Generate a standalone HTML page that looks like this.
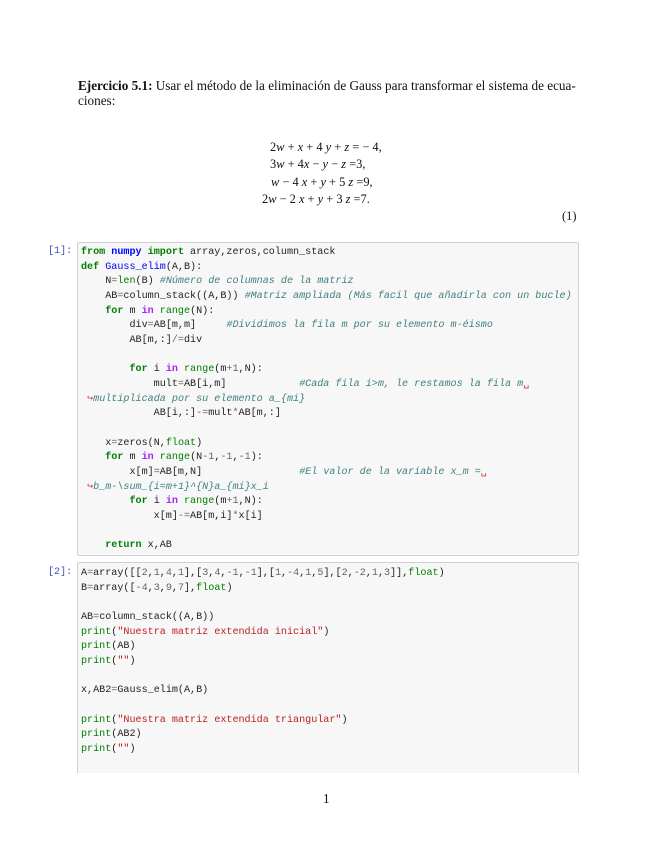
<!DOCTYPE html>
<html><head><meta charset="utf-8"><style>
html,body{margin:0;overflow:hidden}
body{background:#fff;width:655px;height:848px;position:relative;font-family:"Liberation Serif",serif;color:#111}
.t{position:absolute;font-size:13.2px;white-space:nowrap}
.box{position:absolute;left:77px;width:500px;background:#f7f7f7;border:1px solid #cfcfcf;border-radius:2px}
pre{position:absolute;left:81px;margin:0;font-family:"Liberation Mono",monospace;font-size:10.1px;line-height:14.65px;color:#222}
.p{position:absolute;font-family:"Liberation Mono",monospace;font-size:10.1px;color:#3f51b5}
.k{color:#008000;font-weight:bold}.b{color:#008000}.o{color:#aa22ff;font-weight:bold}
.c{color:#408080;font-style:italic}.s{color:#ba2121}.n{color:#666}.f{color:#0000ff}.a{color:#d33}
.eq{position:absolute;font-size:12.4px;white-space:nowrap;font-family:"Liberation Serif",serif}
.eq i{font-style:italic}
</style></head><body>
<div class="t" style="left:78px;top:78px"><b>Ejercicio 5.1:</b> Usar el método de la eliminación de Gauss para transformar el sistema de ecua-</div>
<div class="t" style="left:78px;top:93px">ciones:</div>
<div class="eq" style="left:270px;top:140px">2<i>w</i> + <i>x</i> + 4 <i>y</i> + <i>z</i> = − 4,</div>
<div class="eq" style="left:270px;top:157px">3<i>w</i> + 4<i>x</i> − <i>y</i> − <i>z</i> =3,</div>
<div class="eq" style="left:271px;top:175px"><i>w</i> − 4 <i>x</i> + <i>y</i> + 5 <i>z</i> =9,</div>
<div class="eq" style="left:262px;top:192px">2<i>w</i> − 2 <i>x</i> + <i>y</i> + 3 <i>z</i> =7.</div>
<div class="eq" style="left:562px;top:209px">(1)</div>

<div class="p" style="left:48px;top:246px">[1]:</div>
<div class="box" style="top:242px;height:312px"></div>
<pre style="top:246px"><span class="k">from</span> <span class="f" style="font-weight:bold">numpy</span> <span class="k">import</span> array,zeros,column_stack
<span class="k">def</span> <span class="f">Gauss_elim</span>(A,B):
    N<span class="n">=</span><span class="b">len</span>(B) <span class="c">#Número de columnas de la matriz</span>
    AB<span class="n">=</span>column_stack((A,B)) <span class="c">#Matriz ampliada (Más facil que añadirla con un bucle)</span>
    <span class="k">for</span> m <span class="o">in</span> <span class="b">range</span>(N):
        div<span class="n">=</span>AB[m,m]     <span class="c">#Dividimos la fila m por su elemento m-éismo</span>
        AB[m,:]<span class="n">/=</span>div

        <span class="k">for</span> i <span class="o">in</span> <span class="b">range</span>(m<span class="n">+1</span>,N):
            mult<span class="n">=</span>AB[i,m]            <span class="c">#Cada fila i&gt;m, le restamos la fila m</span><span class="a">␣</span>
 <span class="a">↪</span><span class="c">multiplicada por su elemento a_{mi}</span>
            AB[i,:]<span class="n">-=</span>mult<span class="n">*</span>AB[m,:]

    x<span class="n">=</span>zeros(N,<span class="b">float</span>)
    <span class="k">for</span> m <span class="o">in</span> <span class="b">range</span>(N<span class="n">-1</span>,<span class="n">-1</span>,<span class="n">-1</span>):
        x[m]<span class="n">=</span>AB[m,N]                <span class="c">#El valor de la variable x_m =</span><span class="a">␣</span>
 <span class="a">↪</span><span class="c">b_m-\sum_{i=m+1}^{N}a_{mi}x_i</span>
        <span class="k">for</span> i <span class="o">in</span> <span class="b">range</span>(m<span class="n">+1</span>,N):
            x[m]<span class="n">-=</span>AB[m,i]<span class="n">*</span>x[i]

    <span class="k">return</span> x,AB</pre>

<div class="p" style="left:48px;top:567px">[2]:</div>
<div class="box" style="top:562px;height:210px;border-bottom:none;border-radius:2px 2px 0 0"></div>
<pre style="top:567px">A<span class="n">=</span>array([[<span class="n">2</span>,<span class="n">1</span>,<span class="n">4</span>,<span class="n">1</span>],[<span class="n">3</span>,<span class="n">4</span>,<span class="n">-1</span>,<span class="n">-1</span>],[<span class="n">1</span>,<span class="n">-4</span>,<span class="n">1</span>,<span class="n">5</span>],[<span class="n">2</span>,<span class="n">-2</span>,<span class="n">1</span>,<span class="n">3</span>]],<span class="b">float</span>)
B<span class="n">=</span>array([<span class="n">-4</span>,<span class="n">3</span>,<span class="n">9</span>,<span class="n">7</span>],<span class="b">float</span>)

AB<span class="n">=</span>column_stack((A,B))
<span class="b">print</span>(<span class="s">"Nuestra matriz extendida inicial"</span>)
<span class="b">print</span>(AB)
<span class="b">print</span>(<span class="s">""</span>)

x,AB2<span class="n">=</span>Gauss_elim(A,B)

<span class="b">print</span>(<span class="s">"Nuestra matriz extendida triangular"</span>)
<span class="b">print</span>(AB2)
<span class="b">print</span>(<span class="s">""</span>)</pre>
<div class="t" style="left:323px;top:791px">1</div>
</body></html>
